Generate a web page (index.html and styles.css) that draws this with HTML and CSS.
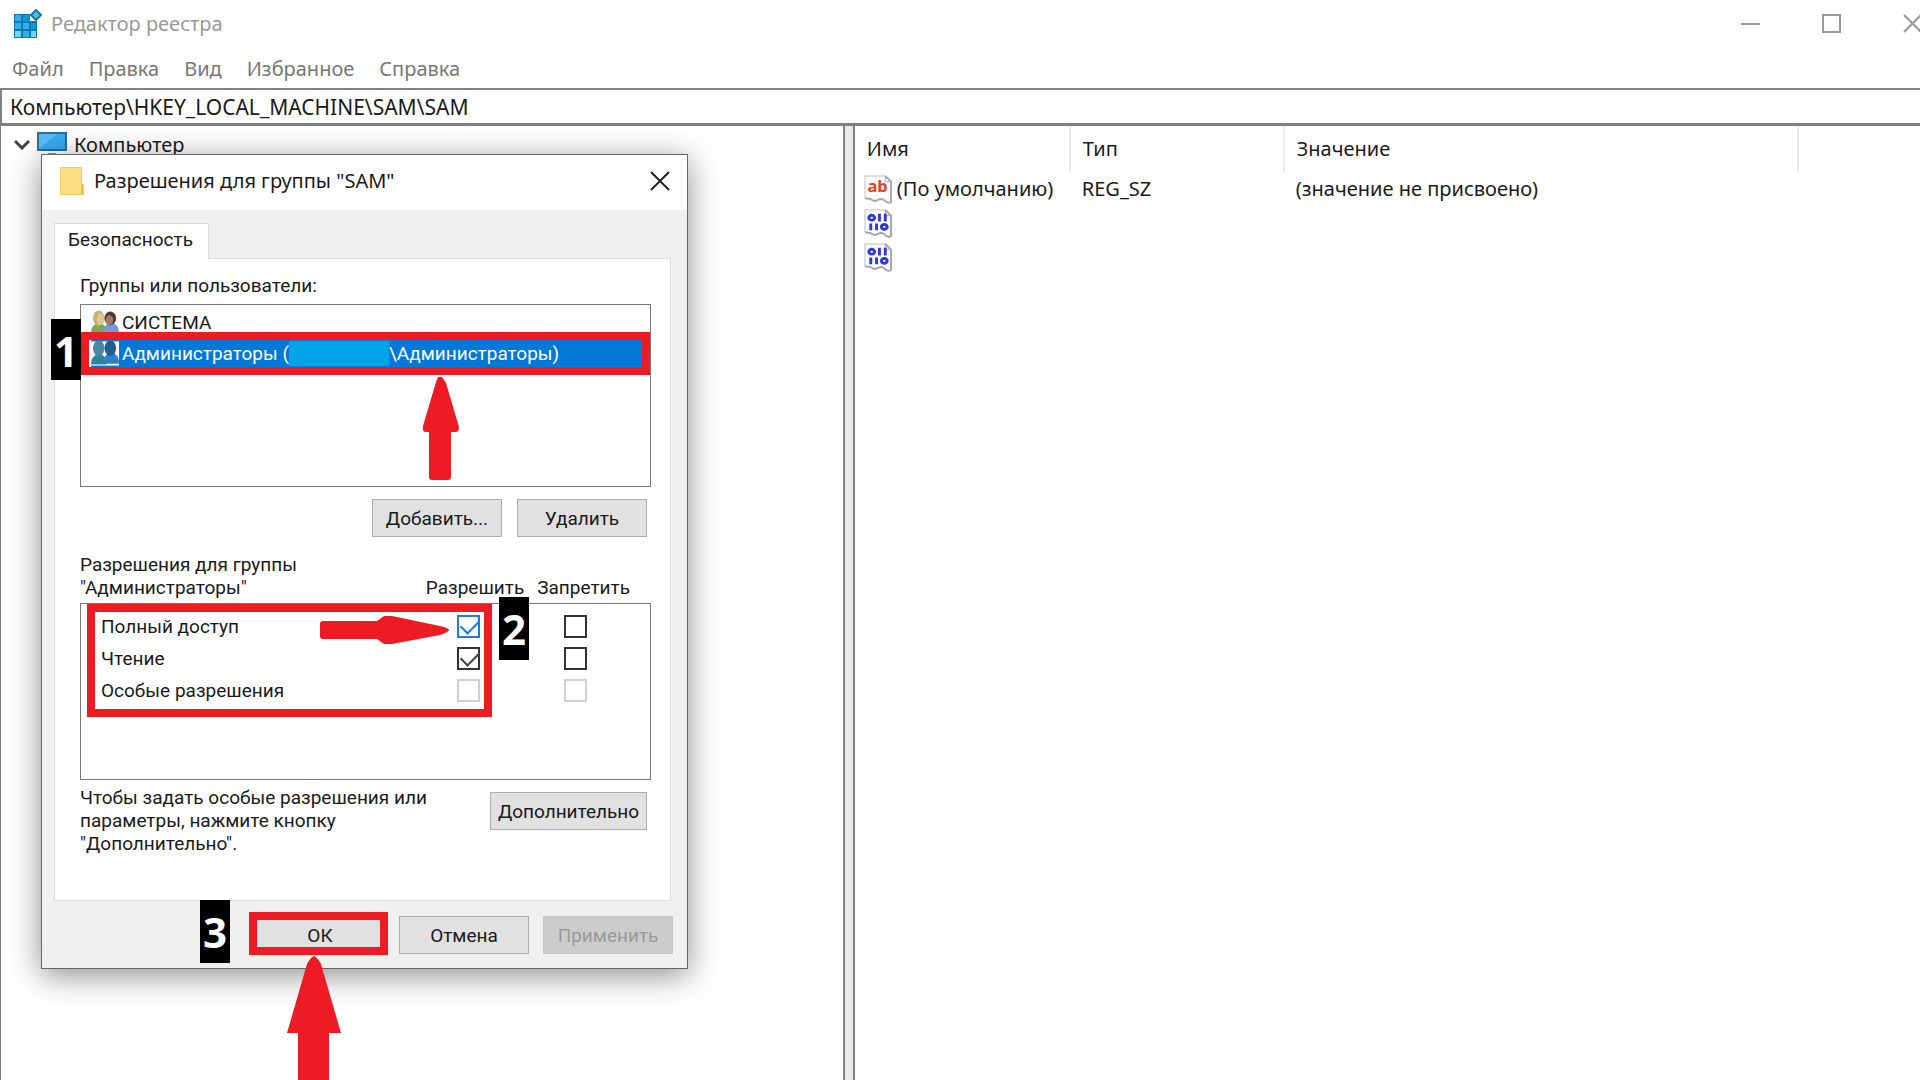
FILE: index.html
```html
<!DOCTYPE html>
<html lang="ru">
<head>
<meta charset="utf-8">
<meta name="viewport" content="width=device-width, initial-scale=1">
<title>Редактор реестра</title>
<link rel="stylesheet" href="styles.css">
</head>
<body>
<div class="regedit">
  <header class="titlebar">
    <svg class="app-icon" viewBox="0 0 30 30" aria-hidden="true">
      <path d="M1 5h16v7h7v17H1z" fill="#0b7ab4"/>
      <path d="M2 6h6v6H2zM2 14h6v6H2zM10 22h6v6h-6zM10 14h6v6h-6z" fill="#2fb0e8"/>
      <path d="M2 22h6v6H2zM18 22h5v6h-5z" fill="#6fd6fa"/>
      <path d="M10 6h6v6h-6zM18 14h5v6h-5z" fill="#1296d2"/>
      <path d="M23 1l5 5-5 5-5-5z" fill="#4cbde6" stroke="#1878a4" stroke-width="2"/>
    </svg>
    <h1 class="app-title">Редактор реестра</h1>
    <div class="window-controls">
      <button class="window-button" type="button" aria-label="Свернуть"><svg viewBox="0 0 20 20"><path d="M0 10h19"/></svg></button>
      <button class="window-button" type="button" aria-label="Развернуть"><svg viewBox="0 0 20 20"><path d="M1 1h17v17H1z"/></svg></button>
      <button class="window-button" type="button" aria-label="Закрыть"><svg viewBox="0 0 20 20"><path d="M1 1l17 17M18 1L1 18"/></svg></button>
    </div>
  </header>

  <nav class="menu">
    <a href="#file">Файл</a>
    <a href="#edit">Правка</a>
    <a href="#view">Вид</a>
    <a href="#favorites">Избранное</a>
    <a href="#help">Справка</a>
  </nav>

  <input class="address" type="text" aria-label="Путь" value="Компьютер\HKEY_LOCAL_MACHINE\SAM\SAM">

  <main class="panes">
    <section class="tree" aria-label="Разделы">
      <div class="tree-row">
        <svg class="chevron" viewBox="0 0 16 10" aria-hidden="true"><path d="M1 1l7 7 7-7" fill="none" stroke="#444" stroke-width="3"/></svg>
        <svg class="monitor" viewBox="0 0 30 26" aria-hidden="true">
          <path d="M1 1h28v17H1z" fill="#3aa9f0" stroke="#2f6f96" stroke-width="2"/>
          <path d="M2 17L20 2H2z" fill="#5cbcf6"/>
          <path d="M11 21h8v2h6v2H4v-2h7z" fill="#8a98a2"/>
        </svg>
        <span>Компьютер</span>
      </div>
    </section>
    <div class="splitter"></div>
    <section class="values" aria-label="Параметры">
      <table class="values-table">
        <colgroup><col class="col-name"><col class="col-type"><col class="col-value"><col></colgroup>
        <thead><tr><th scope="col">Имя</th><th scope="col">Тип</th><th scope="col">Значение</th><td></td></tr></thead>
        <tbody>
          <tr>
            <td><div class="value-name">
              <svg class="value-icon" viewBox="0 0 30 30" aria-hidden="true">
                <path d="M1 24V1h21l6 6v21q-3 2-6-1-3-4-8-1-4 2-7-1z" fill="#fafafa"/><path d="M1 24V1h21" fill="none" stroke="#dcdee0" stroke-width="2"/><path d="M22 1l6 6v21q-3 2-6-1-3-4-8-1-4 2-7-1l-6-1" fill="none" stroke="#a4a8ab" stroke-width="2"/><path d="M22 1v6h6" fill="none" stroke="#a9adb0"/>
                <text class="glyph" x="14" y="18">ab</text>
              </svg>
              <span>(По умолчанию)</span></div></td>
            <td>REG_SZ</td><td>(значение не присвоено)</td><td></td>
          </tr>
          <tr>
            <td><div class="value-name">
              <svg class="value-icon" viewBox="0 0 30 30" role="img" aria-label="Двоичный параметр">
                <path d="M1 24V1h21l6 6v21q-3 2-6-1-3-4-8-1-4 2-7-1z" fill="#fafafa"/><path d="M1 24V1h21" fill="none" stroke="#dcdee0" stroke-width="2"/><path d="M22 1l6 6v21q-3 2-6-1-3-4-8-1-4 2-7-1l-6-1" fill="none" stroke="#a4a8ab" stroke-width="2"/><path d="M22 1v6h6" fill="none" stroke="#a9adb0"/>
                <g class="bits"><ellipse cx="8" cy="9" rx="3" ry="2.5"/><path d="M16 5v8M22 5v8M7 15v7M13 15v7"/><ellipse cx="21" cy="18.500" rx="3" ry="2.5"/></g>
              </svg></div></td>
            <td></td><td></td><td></td>
          </tr>
          <tr>
            <td><div class="value-name">
              <svg class="value-icon" viewBox="0 0 30 30" role="img" aria-label="Двоичный параметр">
                <path d="M1 24V1h21l6 6v21q-3 2-6-1-3-4-8-1-4 2-7-1z" fill="#fafafa"/><path d="M1 24V1h21" fill="none" stroke="#dcdee0" stroke-width="2"/><path d="M22 1l6 6v21q-3 2-6-1-3-4-8-1-4 2-7-1l-6-1" fill="none" stroke="#a4a8ab" stroke-width="2"/><path d="M22 1v6h6" fill="none" stroke="#a9adb0"/>
                <g class="bits"><ellipse cx="8" cy="9" rx="3" ry="2.5"/><path d="M16 5v8M22 5v8M7 15v7M13 15v7"/><ellipse cx="21" cy="18.500" rx="3" ry="2.5"/></g>
              </svg></div></td>
            <td></td><td></td><td></td>
          </tr>
        </tbody>
      </table>
    </section>
  </main>

  <section class="dialog" role="dialog" aria-labelledby="dialog-title">
    <header class="dialog-bar">
      <svg class="folder" viewBox="0 0 24 30" aria-hidden="true">
        <path d="M0 1h22v16l2 2v10H0z" fill="#f0cf62"/>
        <path d="M1 2h20v26H1z" fill="#fbdf82"/>
        <path d="M21 28v-9l2-1v10z" fill="#e6bd45"/>
      </svg>
      <h2 class="dialog-title" id="dialog-title">Разрешения для группы "SAM"</h2>
      <button class="dialog-close" type="button" aria-label="Закрыть"><svg viewBox="0 0 20 20"><path d="M1 1l18 18M19 1L1 19"/></svg></button>
    </header>

    <div class="dialog-body">
      <button class="tab" type="button" role="tab" aria-selected="true">Безопасность</button>
      <div class="panel">
        <p class="caption" id="groups-label">Группы или пользователи:</p>
        <ul class="groups" role="listbox" aria-labelledby="groups-label">
          <li class="group" role="option">
            <svg class="users" viewBox="0 0 29 25" aria-hidden="true">
              <path d="M0 24q0-9 7-11h3q6 2 6 11z" fill="#79a84e"/><ellipse cx="8" cy="8" rx="6" ry="8" fill="#c9b272"/><ellipse cx="10" cy="9" rx="4" ry="6" fill="#dcc596"/>
              <path d="M13 24q0-9 6-11h4q6 2 6 11z" fill="#6f9bd0"/><ellipse cx="20" cy="8" rx="6" ry="7" fill="#4d3a36"/><ellipse cx="19" cy="10" rx="4" ry="5" fill="#a87963"/>
            </svg>
            <span>СИСТЕМА</span>
          </li>
          <li class="group group-selected" role="option" aria-selected="true">
            <svg class="users" viewBox="0 0 29 25" aria-hidden="true">
              <path d="M0 0h29v25H0z" fill="#fff"/>
              <path d="M0 24q0-9 7-11h3q6 2 6 11z" fill="#2e8794"/><ellipse cx="8" cy="7" rx="6" ry="8" fill="#4c86a0"/>
              <path d="M13 23q0-9 6-11h4q6 2 6 11z" fill="#2d7fd0"/><ellipse cx="20" cy="7" rx="6" ry="8" fill="#245c96"/>
            </svg>
            <span>Администраторы (</span><span class="redaction"></span><span>\Администраторы)</span>
          </li>
        </ul>
        <div class="actions">
          <button class="button" type="button">Добавить...</button>
          <button class="button" type="button">Удалить</button>
        </div>
        <div class="permissions-head">
          <p class="caption">Разрешения для группы<br>"Администраторы"</p>
          <span class="caption" id="allow">Разрешить</span>
          <span class="caption" id="deny">Запретить</span>
        </div>
        <div class="permissions">
          <table class="permissions-table">
            <tr><th scope="row" id="full">Полный доступ</th><td><input class="check check-focus" type="checkbox" checked aria-labelledby="full allow"></td><td><input class="check" type="checkbox" aria-labelledby="full deny"></td></tr>
            <tr><th scope="row" id="read">Чтение</th><td><input class="check" type="checkbox" checked aria-labelledby="read allow"></td><td><input class="check" type="checkbox" aria-labelledby="read deny"></td></tr>
            <tr><th scope="row" id="special">Особые разрешения</th><td><input class="check" type="checkbox" disabled aria-labelledby="special allow"></td><td><input class="check" type="checkbox" disabled aria-labelledby="special deny"></td></tr>
          </table>
        </div>
        <div class="advanced">
          <p class="caption">Чтобы задать особые разрешения или параметры, нажмите кнопку "Дополнительно".</p>
          <button class="button button-wide" type="button">Дополнительно</button>
        </div>
      </div>
    </div>

    <footer class="dialog-footer">
      <button class="button" type="button">ОК</button>
      <button class="button" type="button">Отмена</button>
      <button class="button" type="button" disabled>Применить</button>
    </footer>

    <svg class="marks" viewBox="42 155 646 925" aria-hidden="true">
      <g class="mark-frame">
        <rect x="85" y="336" width="561" height="35"/>
        <rect x="91" y="608" width="397" height="105"/>
        <rect x="253" y="916" width="131" height="35"/>
      </g>
      <g class="mark-arrow">
        <path d="M438 377h4l4 6 13 44q0 5-3 5h-5v45q0 3-3 3h-16q-3 0-3-3v-45h-4q-3-1-2-6l13-44z"/>
        <path d="M323 621h54l7-5 8 0 48 10q9 2 9 4t-9 5l-48 9h-8l-7-5h-54q-3 0-3-3v-12q0-3 3-3z"/>
        <path d="M314 956q4 2 7 8l20 69h-12v47h-31v-47h-11l20-69q3-6 7-8z"/>
      </g>
    </svg>
    <span class="badge badge-group">1</span>
    <span class="badge badge-allow">2</span>
    <span class="badge badge-ok">3</span>
  </section>
</div>
</body>
</html>
```
FILE: styles.css
```css
* { box-sizing: border-box; }

body {
  margin: 0;
  background: #fff;
  color: #1a1a1a;
  font: 20px/28px "Noto Sans", "Open Sans", sans-serif;
}

h1, h2, p, ul { margin: 0; padding: 0; font-weight: 400; font-size: inherit; }
ul { list-style: none; }
button, input { font: inherit; color: inherit; }
svg { display: block; flex: none; }

/* Main window */
.regedit {
  position: relative;
  display: flex;
  flex-direction: column;
  min-height: 100vh;
  overflow: hidden;
}

.titlebar {
  display: flex;
  align-items: center;
  gap: 8px;
  height: 48px;
  padding-left: 13px;
}
.app-icon { width: 30px; height: 30px; }
.app-title { flex: 1; color: #999; }

/* The window runs past the right edge of the screen */
.window-controls { display: flex; margin-right: -33px; }
.window-button {
  display: flex;
  align-items: center;
  justify-content: center;
  width: 81px;
  height: 48px;
  padding: 0;
  border: 0;
  background: none;
}
.window-button svg {
  width: 20px;
  height: 20px;
  fill: none;
  stroke: #999;
  stroke-width: 2;
}

.menu {
  display: flex;
  gap: 25px;
  height: 40px;
  padding: 7px 12px 0;
}
.menu a { color: #777; text-decoration: none; }

.address {
  width: 100%;
  height: 38px;
  padding: 0 8px;
  border: 2px solid #808080;
  border-width: 2px 0 3px 2px;
  background: #fff;
  font-size: 21px;
  outline: 0;
}

.panes {
  flex: 1;
  display: grid;
  grid-template-columns: 44% 8px 1fr;
}
.tree { border: 2px solid #808080; border-width: 0 2px 0 1px; }
.tree-row {
  display: flex;
  align-items: center;
  height: 37px;
  padding-left: 13px;
}
.chevron { width: 16px; height: 10px; margin-right: 7px; }
.monitor { width: 30px; height: 26px; margin-right: 7px; }
.splitter { background: #e9e9e9; }
.values { border-left: 2px solid #808080; }

.values-table {
  width: 100%;
  table-layout: fixed;
  border-collapse: collapse;
}
.col-name { width: 215px; }
.col-type { width: 214px; }
.col-value { width: 514px; }
.values-table th {
  height: 46px;
  padding: 0 0 0 12px;
  border-right: 2px solid #ececec;
  font-weight: 400;
  text-align: left;
}
.values-table td { height: 34px; padding: 0 0 0 12px; white-space: nowrap; }
.values-table td:first-child { padding-left: 9px; }
.value-name { display: flex; align-items: center; gap: 4px; }
.value-icon { width: 29px; height: 29px; overflow: visible; }
.glyph { font: 700 17px "Noto Sans", sans-serif; text-anchor: middle; fill: #e0452a; }
.bits { fill: none; stroke: #3038d0; stroke-width: 3; }

/* Permissions dialog */
.dialog {
  position: absolute;
  top: 154px;
  left: 41px;
  width: 647px;
  border: 1px solid #666;
  background: #f0f0f0;
  box-shadow: 0 6px 30px rgba(0, 0, 0, .45);
  font: 19px/23px Roboto, sans-serif;
}

.dialog-bar {
  display: flex;
  align-items: center;
  height: 55px;
  padding: 0 0 3px 18px;
  background: #fff;
  font: 20px/28px "Noto Sans", sans-serif;
}
.folder { width: 24px; height: 30px; }
.dialog-title { flex: 1; padding-left: 10px; }
.dialog-close {
  display: flex;
  align-items: center;
  justify-content: center;
  width: 55px;
  height: 52px;
  padding: 0;
  border: 0;
  background: none;
}
.dialog-close svg { width: 20px; height: 20px; stroke: #222; stroke-width: 2; }

.dialog-body { padding: 13px 16px 0 12px; }
.tab {
  position: relative;
  display: block;
  height: 36px;
  margin-bottom: -1px;
  padding: 0 15px 4px 13px;
  border: 1px solid #ddd;
  border-bottom: 0;
  background: #fff;
}
.panel {
  height: 643px;
  padding: 15px 19px 0 25px;
  border: 1px solid #ddd;
  background: #fff;
}

.groups {
  height: 183px;
  margin-top: 7px;
  padding: 2px 7px 0 10px;
  border: 1px solid #777;
}
.group { display: flex; align-items: center; gap: 3px; height: 31px; }
.group-selected { gap: 0; background: #0078d7; color: #fff; }
.users { width: 28px; height: 25px; }
.group-selected .users { margin-right: 3px; }
.redaction { width: 100px; height: 25px; background: #00a2e8; }

.button {
  width: 130px;
  height: 38px;
  padding: 0;
  border: 1px solid #adadad;
  background: #e1e1e1;
}
.button:disabled { border-color: #c6c6c6; background: #ccc; color: #999; }
.button-wide { width: 157px; }

.actions {
  display: flex;
  justify-content: flex-end;
  gap: 15px;
  margin-top: 12px;
  padding-right: 4px;
}

.permissions-head {
  display: flex;
  align-items: flex-end;
  gap: 13px;
  margin-top: 16px;
  padding-right: 21px;
}
.permissions-head p { flex: 1; }
.permissions {
  height: 177px;
  margin-top: 4px;
  padding: 6px 0 0 20px;
  border: 1px solid #777;
}
.permissions-table {
  width: 100%;
  table-layout: fixed;
  border-collapse: collapse;
}
.permissions-table th,
.permissions-table td { height: 32px; padding: 0; }
.permissions-table th { font-weight: 400; text-align: left; }
.permissions-table td { width: 107px; }
.permissions-table td:last-child { width: 86px; }

.check {
  display: block;
  appearance: none;
  width: 23px;
  height: 23px;
  margin: 0;
  border: 2px solid #333;
  background: #fff;
}
.check:checked::before {
  content: "";
  display: block;
  width: 16px;
  height: 9px;
  margin: 2px 0 0 2px;
  border: 2px solid #444;
  border-width: 0 0 2px 2px;
  transform: rotate(-45deg);
}
.check-focus, .check-focus:checked::before { border-color: #1a7fd6; }
.check:disabled { border-color: #d0d0d0; }

.advanced {
  display: flex;
  justify-content: space-between;
  align-items: flex-start;
  margin-top: 6px;
  padding-right: 4px;
}
.advanced p { width: 380px; }
.advanced .button { margin-top: 6px; }

.dialog-footer {
  display: flex;
  justify-content: flex-end;
  gap: 14px;
  padding: 15px 14px 14px 0;
}

/* Tutorial marks drawn over the dialog */
.marks {
  position: absolute;
  top: 0;
  left: 0;
  width: 646px;
  height: 925px;
  pointer-events: none;
}
.mark-frame { fill: none; stroke: #ed1c24; stroke-width: 8; }
.mark-arrow { fill: #ed1c24; }

.badge {
  position: absolute;
  width: 30px;
  height: 63px;
  background: #000;
  color: #fff;
  font: 700 42px/64px "Open Sans", sans-serif;
  text-align: center;
}
.badge-group { top: 164px; left: 9px; height: 61px; }
.badge-allow { top: 442px; left: 457px; }
.badge-ok { top: 745px; left: 158px; }
```
